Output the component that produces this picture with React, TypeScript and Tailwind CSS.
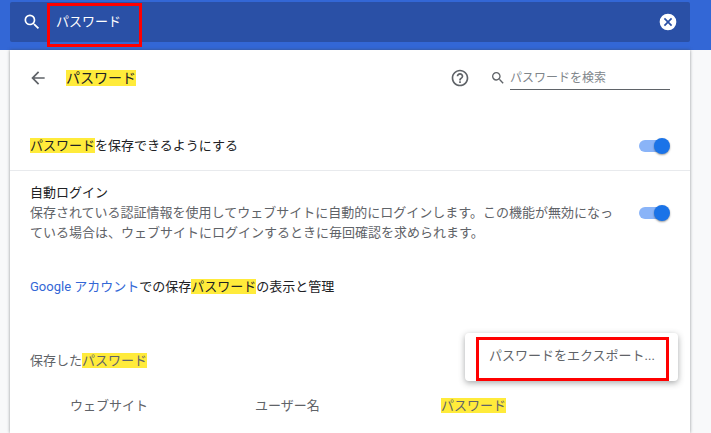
const FONT = "font-['Roboto','Noto_Sans_CJK_JP',sans-serif]";

function Mark({ children }: { children: React.ReactNode }) {
  return <span className="bg-[#ffeb3b]">{children}</span>;
}

function Toggle() {
  return (
    <div className="relative h-[14px] w-[31px] shrink-0">
      <div className="absolute left-0 top-[1px] h-[12px] w-[28px] rounded-full bg-[#8ab4f8]" />
      <div className="absolute right-0 top-[-1px] h-[16px] w-[16px] rounded-full bg-[#1a73e8] shadow-[0_1px_2px_rgba(0,0,0,0.4)]" />
    </div>
  );
}

function SearchIcon({ className }: { className: string }) {
  return (
    <svg viewBox="0 0 24 24" className={className} fill="currentColor">
      <path d="M15.5 14h-.79l-.28-.27A6.47 6.47 0 0 0 16 9.5 6.5 6.5 0 1 0 9.5 16c1.61 0 3.09-.59 4.23-1.57l.27.28v.79l5 4.99L20.49 19l-4.99-5zm-6 0C7.01 14 5 11.99 5 9.5S7.01 5 9.5 5 14 7.01 14 9.5 11.99 14 9.5 14z" />
    </svg>
  );
}

export default function App() {
  return (
    <div className={`${FONT} relative h-[433px] w-[711px] overflow-hidden bg-[#f8f9fa] text-[13px] leading-[20px]`}>
      <header className="h-[50px] bg-[#3367d6] pl-[10px] pr-[21px] pt-[2px]">
        <div className="flex h-[40px] items-center rounded-[2px] bg-[#2a50a6] pl-[12px] pr-[12px] text-white">
          <SearchIcon className="h-[20px] w-[20px]" />
          <span className="ml-[14px] flex-1 text-[13px]">パスワード</span>
          <svg viewBox="0 0 24 24" className="h-[20px] w-[20px]" fill="currentColor">
            <path d="M12 2a10 10 0 1 0 0 20 10 10 0 0 0 0-20zm5 13.6L15.6 17 12 13.4 8.4 17 7 15.6l3.6-3.6L7 8.4 8.4 7l3.6 3.6L15.6 7 17 8.4 13.4 12l3.6 3.6z" />
          </svg>
        </div>
      </header>

      <main className="ml-[10px] mr-[21px] h-[383px] bg-white text-[#202124] shadow-[0_0_3px_rgba(60,64,67,0.55)]">
        <div className="flex h-[56px] items-center pl-[18px] pr-[20px]">
          <svg viewBox="0 0 24 24" className="h-[20px] w-[20px] text-[#5f6368]" fill="currentColor">
            <path d="M20 11H7.83l5.59-5.59L12 4l-8 8 8 8 1.41-1.41L7.83 13H20v-2z" />
          </svg>
          <span className="ml-[18px] text-[14px] text-[#202124]"><Mark>パスワード</Mark></span>
          <div className="flex-1" />
          <svg viewBox="0 0 24 24" className="h-[20px] w-[20px] text-[#5f6368]" fill="currentColor">
            <path d="M11 18h2v-2h-2v2zm1-16C6.48 2 2 6.48 2 12s4.48 10 10 10 10-4.48 10-10S17.52 2 12 2zm0 18c-4.41 0-8-3.59-8-8s3.59-8 8-8 8 3.59 8 8-3.59 8-8 8zm0-14c-2.21 0-4 1.79-4 4h2c0-1.1.9-2 2-2s2 .9 2 2c0 2-3 1.75-3 5h2c0-2.25 3-2.5 3-5 0-2.21-1.79-4-4-4z" />
          </svg>
          <SearchIcon className="ml-[20px] h-[16px] w-[16px] text-[#5f6368]" />
          <div className="ml-[4px] h-[24px] w-[160px] border-b border-[#5f6368] pt-[2px] text-[12px] text-[#80868b]">パスワードを検索</div>
        </div>

        <div className="mt-[14px] flex h-[51px] items-center justify-between border-b border-[#e8eaed] pl-[20px] pr-[20px] pt-[2px]">
          <span><Mark>パスワード</Mark>を保存できるようにする</span>
          <Toggle />
        </div>

        <div className="flex items-center justify-between pl-[20px] pr-[20px] pt-[12px]">
          <div className="w-[590px]">
            <div>自動ログイン</div>
            <div className="text-[#5f6368]">保存されている認証情報を使用してウェブサイトに自動的にログインします。この機能が無効になっている場合は、ウェブサイトにログインするときに毎回確認を求められます。</div>
          </div>
          <Toggle />
        </div>

        <div className="mt-[34px] pl-[20px]">
          <span className="text-[#3367d6]">Google アカウント</span>での保存<Mark>パスワード</Mark>の表示と管理
        </div>

        <div className="mt-[54px] pl-[20px] text-[#5f6368]">保存した<Mark>パスワード</Mark></div>

        <div className="mt-[25px] flex pl-[60px] text-[#5f6368]">
          <div className="w-[185px]">ウェブサイト</div>
          <div className="w-[186px]">ユーザー名</div>
          <div><Mark>パスワード</Mark></div>
        </div>
      </main>

      {/* menu and the red marks lie over the page */}
      <div className="absolute left-[465px] top-[333px] flex h-[48px] w-[213px] items-center rounded-[4px] bg-white pb-[2px] pl-[24px] text-[#5f6368] shadow-[0_2px_6px_rgba(60,64,67,0.45)]">
        パスワードをエクスポート...
      </div>
      <div className="absolute left-[476px] top-[337px] h-[44px] w-[193px] border-[3px] border-[#ff0000]" />
      <div className="absolute left-[47px] top-[3px] h-[44px] w-[95px] border-[3px] border-[#ff0000]" />
    </div>
  );
}
